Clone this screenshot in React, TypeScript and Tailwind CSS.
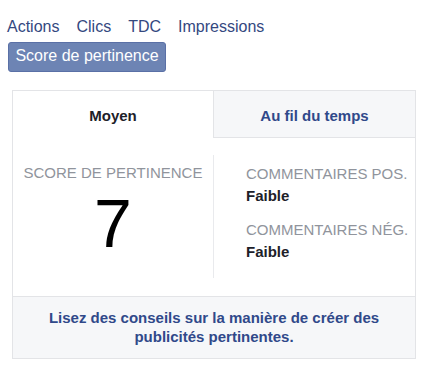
export default function App() {
  return (
    <div
      className="w-[435px] h-[373px] bg-white"
      style={{ fontFamily: '"Liberation Sans", Arial, Helvetica, sans-serif' }}
    >
      <div className="flex gap-[17px] pl-[7px] pt-[18px] text-[16px] leading-[18px] text-[#34487f]">
        <span>Actions</span>
        <span>Clics</span>
        <span>TDC</span>
        <span>Impressions</span>
      </div>
      <div className="ml-[8px] mt-[6px] flex h-[30px] w-[158px] items-center justify-center rounded-[3px] border border-[#5a70a6] bg-[#6d84b4] pb-[3px] text-[16px] leading-[18px] text-white">
        Score de pertinence
      </div>
      <div className="ml-[12px] mt-[18px] w-[404px] border border-[#e3e4e7]">
        <div className="flex h-[47px]">
          <div className="flex w-[200px] items-center justify-center pt-[3px] text-[15px] font-bold leading-[18px] text-[#1d2129]">
            Moyen
          </div>
          <div className="flex flex-1 items-center justify-center border-b border-l border-[#e3e4e7] bg-[#f6f7f9] pt-[4px] text-[15px] font-bold leading-[18px] text-[#30498a]">
            Au fil du temps
          </div>
        </div>
        <div className="flex h-[158px] items-start pt-[17px]">
          <div className="flex h-[123px] w-[201px] flex-col items-center border-r border-[#e9eaed] pt-[9px]">
            <div className="text-[15px] leading-[18px] text-[#90949c]">SCORE DE PERTINENCE</div>
            <div className="mt-[7px] text-[68px] leading-[68px] text-black">7</div>
          </div>
          <div className="flex flex-col pl-[32px] pt-[10px]">
            <div className="text-[15px] leading-[18px] text-[#90949c]">COMMENTAIRES POS.</div>
            <div className="mt-[4px] text-[15px] font-bold leading-[18px] text-[#1d2129]">Faible</div>
            <div className="mt-[16px] text-[15px] leading-[18px] text-[#90949c]">COMMENTAIRES NÉG.</div>
            <div className="mt-[4px] text-[15px] font-bold leading-[18px] text-[#1d2129]">Faible</div>
          </div>
        </div>
        <div className="h-[62px] border-t border-[#e3e4e7] bg-[#f6f7f9] pt-[11px] text-center text-[15px] font-bold leading-[19px] text-[#30498a]">
          Lisez des conseils sur la manière de créer des
          <br />
          publicités pertinentes.
        </div>
      </div>
    </div>
  );
}
